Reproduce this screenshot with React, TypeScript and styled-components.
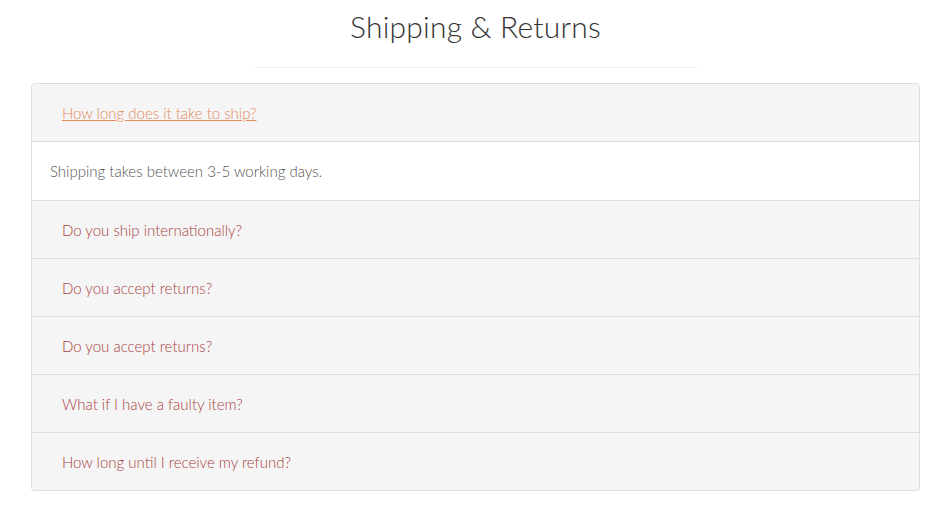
import React from "react";
import styled, { createGlobalStyle } from "styled-components";

const Global = createGlobalStyle`
  html, body { margin: 0; padding: 0; background: #fff; }
  body { font-family: "Lato", "Open Sans", "Liberation Sans", sans-serif; font-weight: 300; }
`;

const Page = styled.div`
  width: 944px;
  padding: 0 24px 0 31px;
  box-sizing: border-box;
`;

const Title = styled.h1`
  margin: 0;
  padding-top: 8px;
  text-align: center;
  font-size: 30px;
  font-weight: 300;
  color: #333;
  line-height: 36px;
  letter-spacing: 0.2px;
`;

const Rule = styled.hr`
  width: 443px;
  margin: 23px auto 15px;
  border: 0;
  border-top: 1px solid #eee;
`;

const Panel = styled.div`
  border: 1px solid #ddd;
  border-radius: 4px;
  box-shadow: 0 1px 1px rgba(0, 0, 0, 0.05);
  overflow: hidden;
`;

const Header = styled.div<{ $first?: boolean }>`
  height: 57px;
  display: flex;
  align-items: center;
  padding: 0 30px;
  background: #f5f5f5;
  border-top: ${(p) => (p.$first ? "0" : "1px solid #ddd")};
`;

const Question = styled.a<{ $active?: boolean }>`
  font-size: 15px;
  color: ${(p) => (p.$active ? "#e5895f" : "#a94442")};
  text-decoration: ${(p) => (p.$active ? "underline" : "none")};
  cursor: pointer;
`;

const Body = styled.div`
  height: 58px;
  display: flex;
  align-items: center;
  padding: 0 18px;
  background: #fff;
  border-top: 1px solid #ddd;
  font-size: 15px;
  color: #555;
`;

const items = [
  "Do you ship internationally?",
  "Do you accept returns?",
  "Do you accept returns?",
  "What if I have a faulty item?",
  "How long until I receive my refund?",
];

export default function App() {
  return (
    <Page>
      <Global />
      <Title>Shipping &amp; Returns</Title>
      <Rule />
      <Panel>
        <Header $first>
          <Question $active>How long does it take to ship?</Question>
        </Header>
        <Body>Shipping takes between 3-5 working days.</Body>
        {items.map((q, i) => (
          <Header key={i}>
            <Question>{q}</Question>
          </Header>
        ))}
      </Panel>
    </Page>
  );
}
